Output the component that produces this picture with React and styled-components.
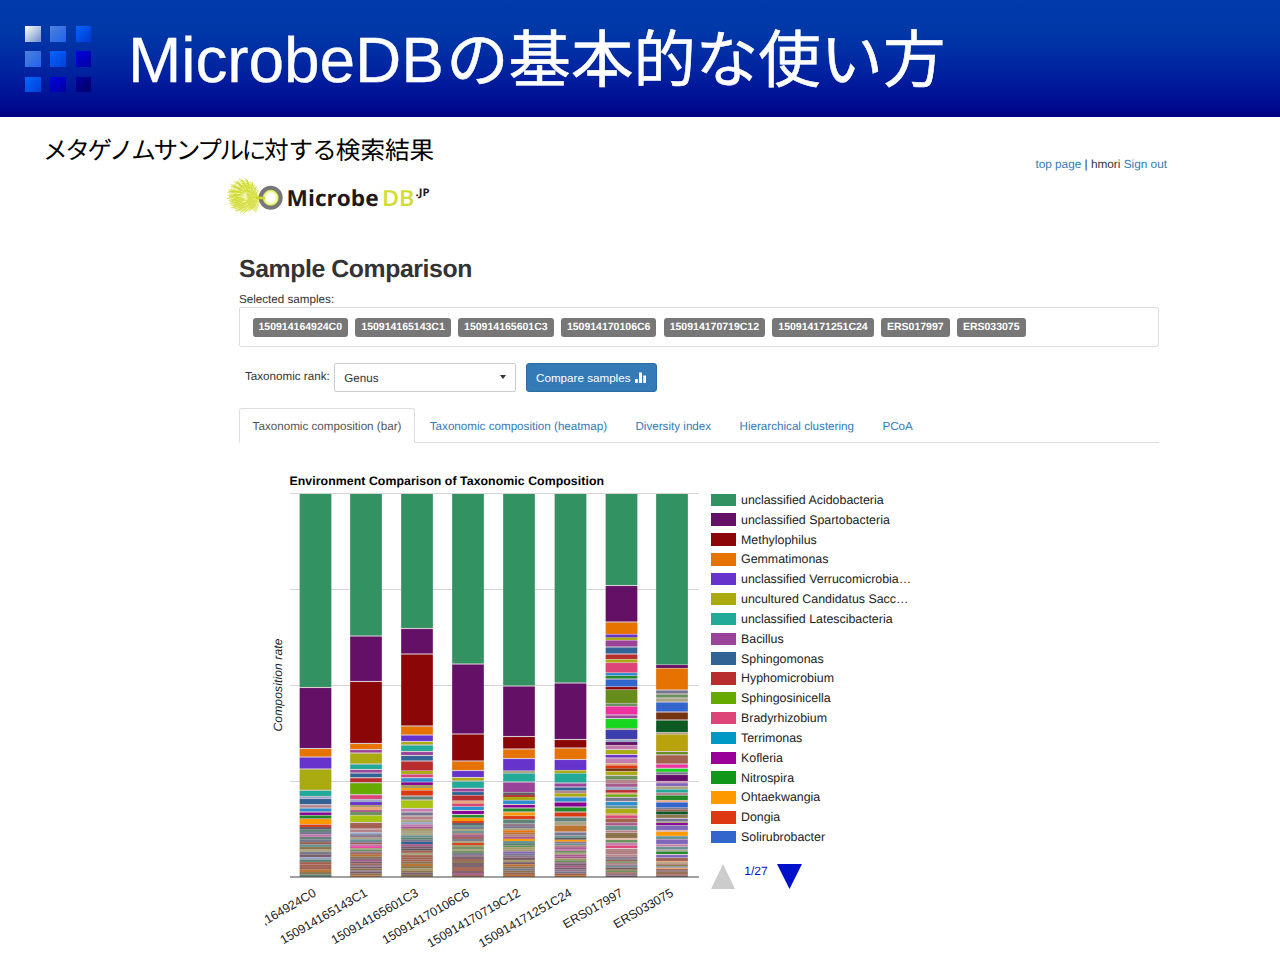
import React from "react";
import styled, { createGlobalStyle } from "styled-components";

const sans = `"Liberation Sans", "Noto Sans CJK JP", sans-serif`;

const GlobalStyle = createGlobalStyle`
  * { box-sizing: border-box; }
  body { margin: 0; background: #fff; font-family: ${sans}; text-rendering: geometricPrecision; }
`;

const Slide = styled.div`
  width: 1280px;
  height: 960px;
  overflow: hidden;
  background: #fff;
  color: #333;
  font-size: 11.65px;
`;

const Banner = styled.header`
  height: 117px;
  display: flex;
  align-items: flex-start;
  padding: 21px 25px 0;
  background: linear-gradient(#003aab 0%, #0038a8 28%, #0022a0 62%, #000a90 90%, #000080 100%);
`;

const Emblem = styled.div`
  display: grid;
  grid-template-columns: repeat(3, 15.5px);
  grid-auto-rows: 15.5px;
  gap: 9.8px;
  padding-top: 5px;
`;

const Tile = styled.i`
  background: linear-gradient(135deg, ${(p) => p.$from}, ${(p) => p.$to});
`;

const Title = styled.h1`
  margin: -2px 0 0 37px;
  font-size: 64px;
  line-height: 72px;
  font-weight: 400;
  letter-spacing: -0.1px;
  color: #fff;
  white-space: nowrap;
  -webkit-text-stroke: 0.3px #fff;
`;

const TitleJa = styled.span`
  margin-left: 2.5px;
  font-family: "Noto Sans CJK JP", sans-serif;
  font-size: 62.4px;
  letter-spacing: 0;
  -webkit-text-stroke: 0.6px #fff;
`;

const IntroRow = styled.div`
  height: 57px;
  display: flex;
  justify-content: space-between;
  padding: 14px 113px 0 43px;
`;

const Subtitle = styled.h2`
  margin: 0;
  font-family: "Noto Sans CJK JP", sans-serif;
  font-size: 24.6px;
  line-height: 36px;
  font-weight: 400;
  color: #000;
  white-space: nowrap;
`;

const Kana = styled.span`
  letter-spacing: ${(p) => p.$track}px;
`;

const AccountLinks = styled.nav`
  padding-top: 25.5px;
  line-height: 14px;
  font-size: 11.8px;
`;

const Link = styled.a`
  color: #337ab7;
`;

const LogoSvg = styled.svg`
  display: block;
  margin-left: 222px;
`;

const Page = styled.main`
  width: 920px;
  margin-left: 239px;
`;

const Heading = styled.h2`
  margin: 0;
  padding-top: 34px;
  height: 72px;
  font-size: 24.8px;
  line-height: 32px;
  font-weight: 700;
  letter-spacing: -0.4px;
`;

const FieldLabel = styled.div`
  height: 14.5px;
  line-height: 15px;
`;

const SampleBox = styled.div`
  height: 40px;
  display: flex;
  align-items: center;
  gap: 7.3px;
  padding: 2px 12.5px 0;
  border: 1px solid #ddd;
  border-radius: 2px;
`;

const Badge = styled.span`
  padding: 0 6px;
  height: 18.6px;
  line-height: 19px;
  border-radius: 3px;
  background: #777;
  color: #fff;
  font-size: 10.5px;
  font-weight: 700;
`;

const Controls = styled.div`
  display: flex;
  margin-top: 16.5px;
  padding-left: 6px;
  height: 28.5px;
  line-height: 27px;
`;

const Select = styled.div`
  width: 182px;
  margin: 0 10px 0 4px;
  padding: 2px 9px 0 9.5px;
  display: flex;
  align-items: center;
  justify-content: space-between;
  border: 1px solid #ccc;
  border-radius: 2px;
`;

const Caret = styled.i`
  margin-top: -2px;
  border: 3.5px solid transparent;
  border-top: 4px solid #333;
  border-bottom: 0;
`;

const Button = styled.button`
  width: 131px;
  display: flex;
  align-items: center;
  justify-content: center;
  gap: 4px;
  padding: 1px 0 0;
  border: 1px solid #2e6da4;
  border-radius: 3px;
  background: #337ab7;
  color: #fff;
  font: 11.65px ${sans};
`;

const Tabs = styled.div`
  display: flex;
  height: 35px;
  margin-top: 16px;
  border-bottom: 1px solid #ddd;
`;

const Tab = styled.a`
  height: 35px;
  line-height: 35px;
  padding: 0 12.6px;
  margin-right: 1.2px;
  border: 1px solid ${(p) => (p.$active ? "#ddd" : "transparent")};
  border-bottom-color: ${(p) => (p.$active ? "#fff" : "transparent")};
  border-radius: 3px 3px 0 0;
  color: ${(p) => (p.$active ? "#555" : "#337ab7")};
`;

const ChartRow = styled.section`
  display: flex;
  margin: 27px 0 0 21px;
`;

const Plot = styled.svg`
  flex: none;
  display: block;
  font-family: ${sans};
`;

const Legend = styled.aside`
  padding: 20.4px 0 0 11px;
  color: #222;
  font-size: 12.4px;
`;

const LegendItem = styled.div`
  display: flex;
  align-items: center;
  gap: 5px;
  height: 19.85px;
  white-space: nowrap;
`;

const Swatch = styled.i`
  width: 25px;
  height: 12.4px;
  background: ${(p) => p.$color};
`;

const Pager = styled.div`
  display: flex;
  margin-top: 17px;
  color: #0011cc;
  font-size: 12px;
  line-height: 14px;
`;

const PageCount = styled.span`
  width: 42px;
  text-align: center;
`;

const tiles = [
  ["#ffffff", "#6c8ccb"], ["#4f82d8", "#1f62ee"], ["#0066ff", "#0036d0"],
  ["#4f82d8", "#1f62ee"], ["#0066ff", "#0040d8"], ["#0000dd", "#0000a0"],
  ["#0066ff", "#0040d8"], ["#0000dd", "#0000a0"], ["#00009c", "#000068"],
];

const samples = [
  "150914164924C0", "150914165143C1", "150914165601C3", "150914170106C6",
  "150914170719C12", "150914171251C24", "ERS017997", "ERS033075",
];

const axisLabels = [",164924C0", ...samples.slice(1)];

const tabs = [
  "Taxonomic composition (bar)", "Taxonomic composition (heatmap)",
  "Diversity index", "Hierarchical clustering", "PCoA",
];

const legend = [
  ["#329262", "unclassified Acidobacteria"],
  ["#651067", "unclassified Spartobacteria"],
  ["#8b0707", "Methylophilus"],
  ["#e67300", "Gemmatimonas"],
  ["#6633cc", "unclassified Verrucomicrobia…"],
  ["#aaaa11", "uncultured Candidatus Sacc…"],
  ["#22aa99", "unclassified Latescibacteria"],
  ["#994499", "Bacillus"],
  ["#316395", "Sphingomonas"],
  ["#b82e2e", "Hyphomicrobium"],
  ["#66aa00", "Sphingosinicella"],
  ["#dd4477", "Bradyrhizobium"],
  ["#0099c6", "Terrimonas"],
  ["#990099", "Kofleria"],
  ["#109618", "Nitrospira"],
  ["#ff9900", "Ohtaekwangia"],
  ["#dc3912", "Dongia"],
  ["#3366cc", "Solirubrobacter"],
];

// Segment colours, one letter per genus or per group of minor genera.
const hue = {
  A: "#329262", S: "#651067", M: "#8b0707", G: "#e67300", V: "#6633cc",
  C: "#aaaa11", L: "#22aa99", B: "#994499", P: "#316395", H: "#b82e2e",
  I: "#66aa00", R: "#dd4477", T: "#2b8fce", K: "#850092", N: "#208a28",
  O: "#ff9900", D: "#dc3912", U: "#3366cc", Y: "#a9c413", F: "#ee329f",
  X: "#16d620", E: "#0c5922", W: "#743411", Z: "#b9a30c", J: "#3b3eac",
  Q: "#668d1c", a: "#a4614f", b: "#75778f", c: "#5d8377", d: "#b38285",
  e: "#927788", f: "#a39a69", g: "#5f5962", h: "#c27cae", i: "#98a8c8",
  j: "#8a734b", k: "#785d68", l: "#e9a779", m: "#9b6254", n: "#69915c",
  o: "#ba7330", p: "#a75b8c", q: "#649491", r: "#8066ba", s: "#a8a47f",
};

// Each entry gives the centre of a column and the lower edge of every segment;
// the minor genera share the space that is left under the last edge.
const columns = [
  [315.5, "A687.5 S748.5 G757 V769 C790.3 L796.5 i798.5 P804.7 d808 T812 K815.5 N818.5 O824.7 D827", "gcbhcbmqjsbkicaamojc"],
  [366, "A636 S681.5 M743.5 G749.5 B753 C764 L769.5 B773 P777.7 H782.7 I794.7 R799.5 i802 V805 f807 l810 p812 n815 Y822.5 a829 d832.5", "ibesqbmhFsneaojkpkmekjekjo"],
  [417, "A628.5 S654 M726 G735 V741.5 C745 L751.5 B755.5 P761 H771 C774 R777.7 T782.3 K785 f788 O790 D796 c800 Y808.5 h812 b816 d820", "sihpfssqcbPpkgasamajojfjkj"],
  [468, "A664 S734 M761 G770.5 V777.5 C781 L788.3 B792 P795 H801 l803.7 R806.3 T810.5 K814.5 N818 O821 D823", "gqbsqdpmbsDfnsnbekmjkkmakpm"],
  [519, "A686 S736.5 M749 G758.5 V771 s773 L782 B792.5 g795 H797 C800 T804.5 K808 N812 O816 D819 c824", "ebsGodpOqcnffrbekfkojbjmo"],
  [570.5, "A683 S739.5 M748 G759.5 V770.5 C773 L783 B787 P791 d793 C797 T802 K807 N812 D817 c822 s825 o832 b836", "qgOeqdphnsppfnekpkebmo"],
  [621.5, "A585.5 S622 G634.5 V637.5 C640 B647 P654 H659.5 C662.5 R673 T675.5 N679 U687 M689.5 Q703.5 n706 F715 B718.5 X728.5 n729.5 J739.5 i742 S745 h749.5 C754.5 V758 h763.5 l765.5 D768.5 W771 C775.5 n780 d783 p787.3 i790 H792.7 l794 I797.3 b801.5 T806 q808.3 C814 l815.5 R818 a823 p825.5 q830.5 d832.5 j838.5 l839.5 n843 h845 R848.5 d855", "debmndeqkjnmek"],
  [672, "A665 S668 G690 b694 n698 s702 U712 W720 E732.5 s734 Z751.5 Q754.8 a764 F768.3 X772.3 b774.5 S781.5 h782.7 r786.5 s789 L793 d795 N800.5 l802 U808 b809.5 m811.5 E814.5 j818.3 b822 s823 K825 r830.5 l831.5 O836.3 q839 r844.5 h846.5 q850 s851 N854.5 r858 m861", "lfdjqlmkjmmk"],
];

const BASE = 877;

function segmentsOf([, named, minor]) {
  let top = 494;
  const out = named.split(" ").map((s) => {
    const end = Number(s.slice(1));
    const seg = { top, end, color: hue[s[0]] };
    top = end;
    return seg;
  });
  const step = (BASE - top) / minor.length;
  [...minor].forEach((k, i) => {
    out.push({ top: top + i * step, end: top + (i + 1) * step, color: hue[k] });
  });
  return out;
}

function Column({ data }) {
  const x = data[0] - 15.8;
  return (
    <g>
      <rect x={x} y={494} width={31.6} height={BASE - 494} fill="#dacbd3" />
      {segmentsOf(data).map((s, i) => {
        const h = s.end - s.top;
        const gap = h > 3.2 ? 1.1 : 0.15;
        return <rect key={i} x={x} y={i ? s.top + gap / 2 : s.top} width={31.6} height={h - gap + (i ? 0 : gap / 2)} fill={s.color} />;
      })}
    </g>
  );
}

function CompositionChart() {
  return (
    <Plot width="440" height="490" viewBox="260 470 440 490">
      <text x="289.5" y="484.6" fontSize="12.3" fontWeight="700" fill="#000" textLength="314.5">
        Environment Comparison of Taxonomic Composition
      </text>
      {[493.5, 589.5, 685.5, 781.5].map((y) => (
        <line key={y} x1="290" x2="699" y1={y} y2={y} stroke="#d4d4d4" />
      ))}
      {columns.map((c) => <Column key={c[0]} data={c} />)}
      <line x1="290" x2="699" y1="877" y2="877" stroke="#444" />
      <text transform="translate(281.5 731.5) rotate(-90)" fontSize="12.1" fontStyle="italic" fill="#222" textLength="93">
        Composition rate
      </text>
      {axisLabels.map((s, i) => (
        <text key={s} transform={`translate(${columns[i][0] + (i ? 2.2 : 1.4)} 895.4) rotate(-30)`} textAnchor="end" fontSize="12.35" fill="#222">
          {s}
        </text>
      ))}
    </Plot>
  );
}

// Wavy hairs that spread from the mouth of the ring over the whole tuft.
const filaments = Array.from({ length: 150 }, (_, i) => {
  const a = i * 2.4;
  const r = 17 * Math.sqrt((i + 10) / 160);
  const x = 242.5 + Math.cos(a) * r * 0.95;
  const y = 196 + Math.sin(a) * r * 1.06;
  const dx = (258 - x) * 0.28;
  const dy = (198 - y) * 0.28;
  const bend = i % 2 ? 2 : -2;
  return `M${x.toFixed(1)} ${y.toFixed(1)}q${(dx / 2 - bend).toFixed(1)} ${(dy / 2 + bend).toFixed(1)} ${dx.toFixed(1)} ${dy.toFixed(1)}`;
}).join("");

function Logo() {
  return (
    <LogoSvg width="216" height="46" viewBox="222 174 216 46" fontFamily='"Open Sans", sans-serif'>
      <defs>
        <radialGradient id="glow">
          <stop offset="0.4" stopColor="#fff" />
          <stop offset="0.65" stopColor="#eef48e" />
          <stop offset="0.85" stopColor="#c3cf30" />
        </radialGradient>
      </defs>
      <ellipse cx="243" cy="196" rx="14" ry="16" fill="#e6ec7c" opacity="0.6" />
      <path d={filaments} fill="none" stroke="#cfdb30" strokeWidth="0.8" />
      <path d="M246 187L261 196V200L256 213L248 205Z" fill="#d5df35" opacity="0.55" />
      <circle cx="270.7" cy="197.8" r="10" fill="url(#glow)" stroke="#77777a" strokeWidth="4" />
      <path d="M256 198H265" stroke="#cbd82e" strokeWidth="2.6" />
      <text x="286.6" y="206" fontSize="22.2" fontWeight="700" fill="#231815" textLength="92" lengthAdjust="spacingAndGlyphs">Microbe</text>
      <text x="382" y="206" fontSize="22.2" fontWeight="600" fill="#d0dc32" textLength="32.5" lengthAdjust="spacingAndGlyphs">DB</text>
      <text x="415.5" y="196.3" fontSize="10.5" fontWeight="700" fill="#231815" textLength="14" lengthAdjust="spacingAndGlyphs">.JP</text>
    </LogoSvg>
  );
}

export default function App() {
  return (
    <Slide>
      <GlobalStyle />
      <Banner>
        <Emblem>
          {tiles.map(([from, to], i) => <Tile key={i} $from={from} $to={to} />)}
        </Emblem>
        <Title>MicrobeDB<TitleJa>の基本的な使い方</TitleJa></Title>
      </Banner>
      <IntroRow>
        <Subtitle>
          <Kana $track={-2.35}>メタゲノムサンプルに</Kana>対<Kana $track={-1}>する</Kana>検索結果
        </Subtitle>
        <AccountLinks><Link>top page</Link> | hmori <Link>Sign out</Link></AccountLinks>
      </IntroRow>
      <Logo />
      <Page>
        <Heading>Sample Comparison</Heading>
        <FieldLabel>Selected samples:</FieldLabel>
        <SampleBox>
          {samples.map((s) => <Badge key={s}>{s}</Badge>)}
        </SampleBox>
        <Controls>
          <span>Taxonomic rank:</span>
          <Select>Genus<Caret /></Select>
          <Button>
            Compare samples
            <svg width="12" height="12" viewBox="0 0 12 12" fill="#fff">
              <path d="M0 7h2.8v4H0zM4 0.5h3V11H4zM8.3 3.5h2.7V11H8.3z" />
            </svg>
          </Button>
        </Controls>
        <Tabs>
          {tabs.map((t, i) => <Tab key={t} $active={i === 0}>{t}</Tab>)}
        </Tabs>
        <ChartRow>
          <CompositionChart />
          <Legend>
            {legend.map(([color, name]) => (
              <LegendItem key={name}><Swatch $color={color} />{name}</LegendItem>
            ))}
            <Pager>
              <svg width="24" height="25"><path d="M0 25L12 0L24 25Z" fill="#ccc" /></svg>
              <PageCount>1/27</PageCount>
              <svg width="25" height="25"><path d="M0 0H25L12.5 25Z" fill="#0011cc" /></svg>
            </Pager>
          </Legend>
        </ChartRow>
      </Page>
    </Slide>
  );
}
